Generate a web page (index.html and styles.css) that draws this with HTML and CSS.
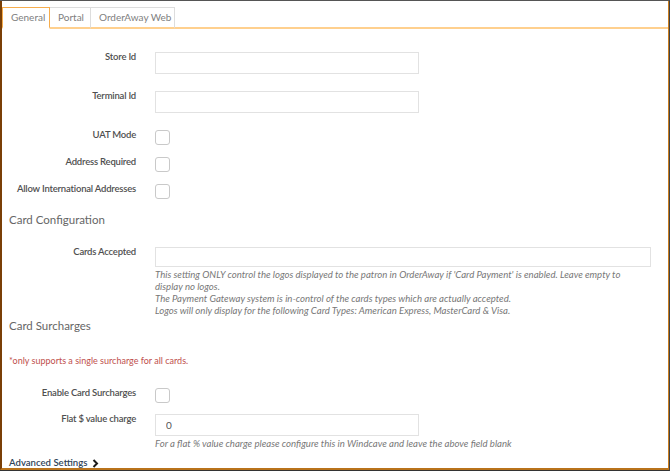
FILE: index.html
```html
<!DOCTYPE html>
<html lang="en">
<head>
  <meta charset="UTF-8" />
  <title>Payment Settings</title>
  <link rel="stylesheet" href="styles.css">
</head>
<body>

  <div class="frame">
    <div class="panel">
      <div class="tabs">
        <a class="tab active">General</a>
        <a class="tab">Portal</a>
        <a class="tab">OrderAway Web</a>
        <div class="tab-fill"></div>
      </div>

      <div class="pane">
        <div class="row row-text">
          <label>Store Id</label>
          <div class="field"><input class="text" type="text"></div>
        </div>
        <div class="row row-text">
          <label>Terminal Id</label>
          <div class="field"><input class="text" type="text"></div>
        </div>
        <div class="row row-check">
          <label>UAT Mode</label>
          <div class="field"><span class="check"></span></div>
        </div>
        <div class="row row-check">
          <label>Address Required</label>
          <div class="field"><span class="check"></span></div>
        </div>
        <div class="row row-check">
          <label>Allow International Addresses</label>
          <div class="field"><span class="check"></span></div>
        </div>

        <h4 class="section">Card Configuration</h4>

        <div class="row row-cards">
          <label>Cards Accepted</label>
          <div class="field">
            <input class="text wide" type="text">
            <p class="help">This setting ONLY control the logos displayed to the patron in OrderAway if 'Card Payment' is enabled. Leave empty to display no logos.<br>
            The Payment Gateway system is in-control of the cards types which are actually accepted.<br>
            Logos will only display for the following Card Types: American Express, MasterCard &amp; Visa.</p>
          </div>
        </div>

        <h4 class="section">Card Surcharges</h4>
        <p class="note">*only supports a single surcharge for all cards.</p>

        <div class="row row-check">
          <label>Enable Card Surcharges</label>
          <div class="field"><span class="check"></span></div>
        </div>
        <div class="row row-flat">
          <label>Flat $ value charge</label>
          <div class="field">
            <input class="text" type="text" value="0">
            <p class="help">For a flat % value charge please configure this in Windcave and leave the above field blank</p>
          </div>
        </div>

        <a class="advanced">Advanced Settings
          <svg width="7" height="9" viewBox="0 0 7 9"><path d="M1.5 1 L5 4.5 L1.5 8" fill="none" stroke="#1a1a1a" stroke-width="2"/></svg>
        </a>
      </div>
    </div>
  </div>

</body>
</html>
```

FILE: styles.css
```css
* {
  box-sizing: border-box;
}

body {
  margin: 0;
  font-family: Lato, 'Noto Sans', sans-serif;
  background: #ffffff;
  color: #555;
}

.frame {
  width: 670px;
  height: 471px;
  border-top: 1px solid #555;
  border-right: 1px solid #444;
  border-bottom: 1px solid #333;
}

.panel {
  height: 100%;
  border-left: 2px solid #7a3f06;
  border-right: 1px solid #c97d1e;
  border-bottom: 2px solid #b9731b;
  display: flex;
  flex-direction: column;
}

/* tabs */
.tabs {
  display: flex;
  margin-top: 6px;
  height: 22px;
}

.tab {
  padding: 0 8px;
  height: 22px;
  line-height: 19px;
  font-size: 10px;
  white-space: nowrap;
  text-align: center;
  color: #808080;
  border: 1px solid #ddd;
  border-bottom: 2px solid #ffd08e;
  border-left: none;
  background: #fff;
}

.tab.active {
  border: 1px solid #f6ad4d;
  border-bottom: 2px solid #fff;
  width: 48px;
}

.tab:nth-child(2) {
  width: 41px;
}

.tab:nth-child(3) {
  width: 84px;
}

.tab-fill {
  flex: 1;
  border-bottom: 2px solid #ffd08e;
}

/* form */
.pane {
  padding: 23px 7px 0;
}

.row {
  display: grid;
  grid-template-columns: 127px 1fr;
  column-gap: 19px;
  align-items: start;
}

.row label {
  text-align: right;
  white-space: nowrap;
  font-size: 9.5px;
  font-weight: 600;
  letter-spacing: -0.2px;
  color: #4f4f4f;
  line-height: 12px;
  margin-top: -1px;
}

.row-text {
  margin-bottom: 17px;
}

.row-text + .row-check {
  margin-top: 1px;
}

.row-check {
  margin-bottom: 12px;
}

.text {
  display: block;
  width: 264px;
  height: 22px;
  border: 1px solid #e2e2e2;
  font-family: inherit;
  font-size: 10px;
  color: #555;
  padding: 0 10px;
  outline: none;
}

.text.wide {
  width: 496px;
  height: 20px;
}

.check {
  display: block;
  width: 15px;
  height: 15px;
  border: 1px solid #c9c9c9;
  border-radius: 3px;
}

.section {
  margin: 4px 0 0 0;
  font-size: 11.5px;
  font-weight: 400;
  color: #666;
  line-height: 18px;
}

.row-cards {
  margin-top: 18px;
}

.help {
  margin: 2px 0 0;
  font-size: 9.6px;
  font-style: italic;
  color: #777;
  line-height: 12px;
  width: 485px;
}

.row-cards + .section {
  margin-top: 0;
}

.note {
  margin: 20px 0 0;
  font-size: 9px;
  color: #c0504d;
  line-height: 12px;
}

.note + .row-check {
  margin-top: 21px;
  margin-bottom: 11px;
}

.advanced {
  display: inline-flex;
  align-items: center;
  gap: 5px;
  margin-top: 0;
  font-size: 9.6px;
  font-weight: 600;
  color: #2f4459;
  line-height: 14px;
}
```
